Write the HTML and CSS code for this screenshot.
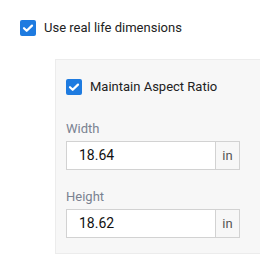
FILE: index.html
```html
<!DOCTYPE html>
<html lang="en">
<head>
  <meta charset="UTF-8" />
  <title>Dimensions</title>
  <link rel="stylesheet" href="styles.css">
</head>
<body>
  <label class="check-row">
    <span class="box"><svg viewBox="0 0 16 16" width="16" height="16"><path d="M4 8.2l2.7 2.6L12 5.6" fill="none" stroke="#fff" stroke-width="2.2" stroke-linecap="round" stroke-linejoin="round"/></svg></span>
    Use real life dimensions
  </label>

  <div class="panel">
    <label class="check-row">
      <span class="box"><svg viewBox="0 0 16 16" width="16" height="16"><path d="M4 8.2l2.7 2.6L12 5.6" fill="none" stroke="#fff" stroke-width="2.2" stroke-linecap="round" stroke-linejoin="round"/></svg></span>
      Maintain Aspect Ratio
    </label>

    <div class="field first">
      <div class="field-label">Width</div>
      <div class="input-group">
        <div class="input">18.64</div>
        <div class="addon">in</div>
      </div>
    </div>

    <div class="field">
      <div class="field-label">Height</div>
      <div class="input-group">
        <div class="input">18.62</div>
        <div class="addon">in</div>
      </div>
    </div>
  </div>
</body>
</html>
```

FILE: styles.css
```css
html, body { margin: 0; }
body { font-family: Roboto, "Noto Sans", Arial, sans-serif; font-size: 13px; color: #222; background: #fff; padding: 20px 0 0 20px; }
.check-row { display: flex; align-items: center; gap: 8px; height: 16px; line-height: 16px; }
.box { width: 16px; height: 16px; background: #1e7be0; border-radius: 2px; display: flex; }
.panel { margin: 23px 0 0 35px; background: #f7f7f7; border: 1px solid #ececec; border-right: none; padding: 19px 10px 15px; }
.field { margin-top: 18px; }
.field.first { margin-top: 25px; }
.field-label { color: #7a8291; line-height: 17px; margin-bottom: 4px; }
.input-group { display: flex; width: 174px; height: 29px; }
.input { flex: 1; background: #fff; border: 1px solid #d2d2d2; border-right: none; padding-left: 12px; font-size: 14px; line-height: 27px; color: #111; }
.addon { width: 23px; border: 1px solid #d2d2d2; text-align: center; line-height: 27px; color: #555; background: #f7f7f7; }
```
